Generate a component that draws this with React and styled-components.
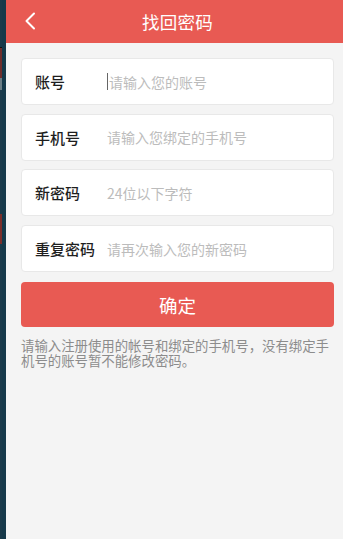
import React from "react";
import styled, { createGlobalStyle } from "styled-components";

const Global = createGlobalStyle`
  html, body { margin: 0; padding: 0; background: #f4f4f4; overflow: hidden; }
  * { box-sizing: border-box; }
  body { font-family: "Noto Sans CJK SC", "Noto Sans", sans-serif; }
`;

const Screen = styled.div`
  display: flex;
  width: 343px;
  height: 539px;
  overflow: hidden;
`;

const EdgeStrip = styled.div`
  flex: 0 0 6px;
  height: 100%;
  display: flex;
`;

const EdgeOuter = styled.div`
  width: 2px;
  height: 100%;
  background: linear-gradient(
    to bottom,
    #1a3a4a 0px, #1a3a4a 47px,
    #111 47px, #111 48px,
    #6e2e2c 48px, #6e2e2c 78px,
    #6a7d85 78px, #6a7d85 90px,
    #1a3a4a 90px, #1a3a4a 214px,
    #7a2e2a 214px, #7a2e2a 244px,
    #1a3a4a 244px, #1a3a4a 100%
  );
`;

const EdgeInner = styled.div`
  flex: 1;
  height: 100%;
  background: #15394a;
`;

const App = styled.div`
  flex: 0 0 343px;
  width: 343px;
  min-height: 100%;
  background: #f4f4f4;
  display: flex;
  flex-direction: column;
`;

const Header = styled.header`
  height: 43px;
  background: #e85a53;
  display: flex;
  align-items: center;
  justify-content: center;
  position: relative;
`;

const BackButton = styled.button`
  position: absolute;
  left: 14px;
  top: 11px;
  width: 20px;
  height: 20px;
  padding: 0;
  border: none;
  background: transparent;
  display: flex;
  align-items: center;
  justify-content: center;
`;

const Title = styled.h1`
  margin: 0;
  color: #fff;
  font-size: 17.5px;
  font-weight: 400;
  letter-spacing: 0.2px;
`;

const Form = styled.div`
  display: flex;
  flex-direction: column;
  gap: 8.7px;
  padding: 15px 15px 0;
`;

const Field = styled.label`
  height: 47px;
  background: #fff;
  border: 1px solid #e8e8e8;
  border-radius: 4px;
  display: flex;
  align-items: center;
  padding-left: 13px;
`;

const Label = styled.span`
  width: 72px;
  flex-shrink: 0;
  font-size: 15px;
  font-weight: 500;
  color: #1e1e1e;
  white-space: nowrap;
`;

const Input = styled.input`
  flex: 1;
  border: none;
  outline: none;
  background: transparent;
  font-family: inherit;
  font-size: 14px;
  color: #333;
  padding: 0;
  caret-color: #555;
  &::placeholder { color: #bcbcbc; }
`;

const Caret = styled.span`
  display: inline-block;
  width: 1px;
  height: 17px;
  background: #666;
  margin-right: 1px;
  flex-shrink: 0;
`;

const Submit = styled.button`
  margin: 10px 15px 0;
  height: 45px;
  border: none;
  border-radius: 4px;
  background: #e85a53;
  color: #fff;
  font-family: inherit;
  font-size: 18.5px;
  display: flex;
  align-items: center;
  justify-content: center;
`;

const Help = styled.p`
  margin: 11px 15px 0;
  font-size: 13.4px;
  line-height: 15px;
  color: #8c8c8c;
`;

const fields = [
  { label: "账号", placeholder: "请输入您的账号", caret: true },
  { label: "手机号", placeholder: "请输入您绑定的手机号" },
  { label: "新密码", placeholder: "24位以下字符" },
  { label: "重复密码", placeholder: "请再次输入您的新密码" },
];

export default function Page() {
  return (
    <>
      <Global />
      <Screen>
        <EdgeStrip>
          <EdgeOuter />
          <EdgeInner />
        </EdgeStrip>
        <App>
          <Header>
            <BackButton aria-label="返回">
              <svg width="12" height="18" viewBox="0 0 12 18" fill="none">
                <path d="M10 1.5 L2.5 9 L10 16.5" stroke="#fff" strokeWidth="2" strokeLinecap="round" strokeLinejoin="round" />
              </svg>
            </BackButton>
            <Title>找回密码</Title>
          </Header>
          <Form>
            {fields.map((f) => (
              <Field key={f.label}>
                <Label>{f.label}</Label>
                {f.caret && <Caret />}
                <Input placeholder={f.placeholder} />
              </Field>
            ))}
          </Form>
          <Submit>确定</Submit>
          <Help>请输入注册使用的帐号和绑定的手机号，没有绑定手机号的账号暂不能修改密码。</Help>
        </App>
      </Screen>
    </>
  );
}
